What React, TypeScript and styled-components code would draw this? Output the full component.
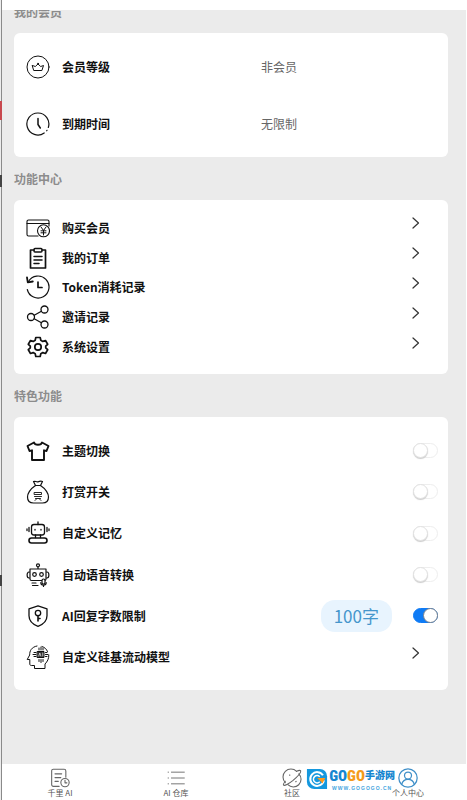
import React, { useState } from "react";
import styled, { createGlobalStyle } from "styled-components";

const GlobalStyle = createGlobalStyle`
  *, *::before, *::after { box-sizing: border-box; }
  body { margin: 0; background: #fff; font-family: "Noto Sans CJK SC", "Noto Sans", sans-serif; }
`;

const Frame = styled.div`
  display: flex;
  min-height: 100vh;
  padding-right: 1px;
`;

const Edge = styled.div`
  flex: none;
  width: 2px;
  background:
    linear-gradient(
      transparent 101px, #c8484e 101px 120px, transparent 120px 175px, #444 175px 187px,
      transparent 187px 575px, #444 575px 586px, transparent 586px
    ),
    linear-gradient(to right, #ececec 1px, #8a8a8a 1px);
`;

const Screen = styled.div`
  position: relative;
  flex: 1;
  min-width: 0;
  display: flex;
  flex-direction: column;
`;

const StatusBar = styled.div`
  height: 10px;
  background: #fff;
`;

const Scroller = styled.main`
  flex: 1;
  overflow: hidden;
  background: #ebebeb;
`;

const Sections = styled.div`
  margin-top: -20px;
  padding: 0 18px 0 12px;
`;

const Heading = styled.h2`
  margin: 0;
  font-size: 12px;
  font-weight: 700;
  line-height: 43px;
  color: #8c8c8c;
`;

const Card = styled.div<{ $pad: string }>`
  padding: ${(p) => p.$pad};
  border-radius: 6px;
  background: #fff;
`;

const InfoRow = styled.div`
  display: grid;
  grid-template-columns: 24px 1fr 1fr;
  gap: 12px;
  align-items: center;
  min-height: 57px;
  padding-left: 12px;
`;

const Label = styled.span`
  font-size: 12px;
  line-height: 18px;
  font-weight: 700;
  color: #111;
`;

const Value = styled.span`
  font-size: 12px;
  line-height: 18px;
  color: #666;
`;

const Rows = styled.div<{ $min: number }>`
  display: grid;
  grid-auto-rows: 1fr;
  min-height: ${(p) => p.$min}px;
`;

const rowLayout = `
  display: flex;
  align-items: center;
  gap: 12px;
  width: 100%;
`;

const LinkRow = styled.button`
  ${rowLayout}
  padding: 0 28px 0 12px;
  border: 0;
  background: none;
  font: inherit;
  text-align: left;
  cursor: pointer;
`;

const SwitchRow = styled.div`
  ${rowLayout}
  padding: 0 10px 0 12px;
`;

const Spacer = styled.span`
  flex: 1;
`;

const ChevronBox = styled.span`
  display: flex;
  padding-bottom: 9px;
`;

const Pill = styled.button`
  margin-right: 9px;
  padding: 0 13px;
  border: 0;
  border-radius: 14px;
  background: #e8f4fe;
  color: #4596cc;
  font: inherit;
  font-size: 17px;
  line-height: 32px;
`;

const Switch = styled.input`
  appearance: none;
  flex: none;
  display: flex;
  width: 25px;
  height: 15px;
  margin: 0;
  border: 1px solid #eee;
  border-radius: 8px;
  background: #fff;
  cursor: pointer;

  &::before {
    content: "";
    width: 15px;
    height: 15px;
    margin: -1px;
    border: 1px solid #e2e2e2;
    border-radius: 50%;
    background: #fff;
    box-shadow: 0 1px 1px #ccc;
  }
  &:checked {
    justify-content: flex-end;
    border-color: #0f7bf5;
    background: #0f7bf5;
  }
  &:checked::before {
    border-color: #77808c;
    box-shadow: none;
  }
`;

const TabBar = styled.nav`
  display: grid;
  grid-template-columns: repeat(4, 1fr);
  height: 36px;
  background: #fff;
`;

const Tab = styled.a`
  display: flex;
  flex-direction: column;
  align-items: center;
  padding-top: 4px;
  color: #555;
  font-size: 8px;
  line-height: 10px;
  text-decoration: none;
`;

const Watermark = styled.div`
  position: absolute;
  right: 71px;
  bottom: 9px;
  display: flex;
  gap: 1px;
  align-items: center;
`;

const Brand = styled.div`
  display: flex;
  flex-direction: column;
  align-items: center;
`;

const BrandName = styled.div`
  display: flex;
  align-items: center;
  font-family: "Liberation Sans Narrow", "Roboto Condensed", "Noto Sans CJK SC", sans-serif;
  font-weight: 900;
  line-height: 18px;
`;

const BrandPart = styled.span<{ $color: string; $size: number }>`
  color: ${(p) => p.$color};
  font-size: ${(p) => p.$size}px;
`;

const BrandUrl = styled.div`
  color: #45a5e0;
  font-family: "Liberation Sans", sans-serif;
  font-size: 5px;
  font-weight: 700;
  line-height: 6px;
  letter-spacing: 1px;
`;

const IconSvg = styled.svg`
  flex: none;
  display: block;
  fill: none;
  stroke: currentColor;
  stroke-linecap: round;
  stroke-linejoin: round;
`;

type IconProps = { children: React.ReactNode; size?: number; weight?: number; color?: string };

function Icon({ children, size = 24, weight = 1.3, color = "#111" }: IconProps) {
  return (
    <IconSvg width={size} height={size} viewBox="0 0 24 24" strokeWidth={weight} color={color} aria-hidden="true">
      {children}
    </IconSvg>
  );
}

const CrownIcon = () => (
  <Icon weight={1}>
    <circle cx="12" cy="12" r="11" />
    <path d="M6.500 10.500l2.800 1L12 9l2.700 2.500 2.800-1-1.600 5H8.100z" />
    <circle cx="12" cy="8.600" r=".5" />
  </Icon>
);

const ClockIcon = () => (
  <Icon weight={1.2}>
    <path d="M18.200 21A11 11 0 1 1 22.300 15.500M20.700 18.800l.3-.5" />
    <path d="M12 6.500v6l2.300 3.500" strokeWidth="1.5" />
  </Icon>
);

const BuyIcon = () => (
  <Icon weight={1.1}>
    <path d="M12 20H2.500A1.500 1.500 0 0 1 1 18.500v-13A1.500 1.500 0 0 1 2.500 4h19A1.500 1.500 0 0 1 23 5.500V10" />
    <path d="M1 7.500h22" />
    <circle cx="17.500" cy="14.800" r="6" />
    <path d="M15 11l2.500 3.500L20 11M17.500 14.500V19M15 14.800h5M15 16.800h5" strokeWidth="1" />
  </Icon>
);

const OrderIcon = () => (
  <Icon weight={1.5}>
    <path d="M8 4H4.500v18h15V4H16" strokeWidth="1.700" />
    <rect x="8" y="2.500" width="8" height="3.500" rx="1" />
    <path d="M8 10.500h8M8 14h8M8 17.500h5" />
  </Icon>
);

const HistoryIcon = () => (
  <Icon weight={1.2}>
    <path d="M2.500 6.500A11 11 0 1 1 1.300 14.500" />
    <path d="M1 2.500l.8 4.800 5-.8" strokeWidth="1.800" />
    <path d="M12 7v5.500h4" strokeWidth="1.700" />
  </Icon>
);

const ShareIcon = () => (
  <Icon weight={1.3}>
    <circle cx="5" cy="12" r="3.500" />
    <circle cx="18.500" cy="4.500" r="3.500" />
    <circle cx="18.500" cy="19.500" r="3.500" />
    <path d="M8.200 10.300l7.200-4M8.200 13.700l7.200 4" />
  </Icon>
);

const GearIcon = () => (
  <Icon weight={1.7}>
    <circle cx="12" cy="12" r="3.200" />
    <path d="M9.800 2.500h4.400l.6 2.800 2 1.100 2.700-.9 2.200 3.800-2 1.900v1.600l2 1.900-2.200 3.800-2.700-.9-2 1.100-.6 2.800H9.800l-.6-2.800-2-1.100-2.700.9-2.200-3.800 2-1.900v-1.600l-2-1.900 2.200-3.800 2.700.9 2-1.100z" />
  </Icon>
);

const ShirtIcon = () => (
  <Icon weight={1.9}>
    <path d="M8 3.500L1.500 7l2 5L6 11.300V21h12v-9.700l2.500.7 2-5L16 3.500c-.8 3-7.200 3-8 0z" />
  </Icon>
);

const BagIcon = () => (
  <Icon weight={1.2}>
    <path d="M9.500 5.500C4 9 1.500 14 1.500 17c0 4 2 6 6 6h9c4 0 6-2 6-6 0-3-2.500-8-8-11.500z" />
    <path d="M9.500 5.500L7.500 1.500c2-.8 2.500.7 4.500.3s2.500-1.100 4.500-.3l-2 4" />
    <path d="M8.500 12.500h7v2h-7zM8.500 16.500h7M9.500 18.500h5M9 20.500l1.500-1.500M15 20.500L13.500 19" strokeWidth=".9" />
  </Icon>
);

const MemoryRobotIcon = () => (
  <Icon weight={1.3}>
    <rect x="5.500" y="3.500" width="13" height="10.500" rx="2.500" />
    <path d="M12 1v2.500M9.500 14v2.500M14.500 14v2.500M3 6.500v4M21 6.500v4M1 8v1.500M23 8v1.500M9 8.300v.8M15 8.300v.8" />
    <rect x="3" y="17" width="18" height="5" rx="2.500" strokeWidth="1.600" />
  </Icon>
);

const VoiceRobotIcon = () => (
  <Icon weight={1.2}>
    <circle cx="12" cy="2.300" r="1.500" />
    <path d="M12 4v2M4 6h16v10a1.500 1.500 0 0 1-1.500 1.500h-13A1.500 1.500 0 0 1 4 16zM3 9c-2.500 0-2.500 6 0 6M21 9c2.500 0 2.500 6 0 6" />
    <circle cx="8.500" cy="11.500" r="1.800" />
    <circle cx="15.500" cy="11.500" r="1.800" />
    <path d="M6 20h4M6.500 22.500H12" />
    <rect x="16" y="16" width="3" height="5" rx="1.500" fill="#fff" />
    <path d="M14.800 19.500c0 3.500 5.400 3.500 5.400 0M17.500 22.200v1.300" />
  </Icon>
);

const ShieldIcon = () => (
  <Icon weight={1.3}>
    <path d="M12 1.800l9 3v7c0 5-4 8.700-9 10.500-5-1.800-9-5.500-9-10.500v-7z" />
    <circle cx="12" cy="9" r="2.700" />
    <path d="M12 11.700V17M12 14.500h2" strokeWidth="1.600" />
  </Icon>
);

const BrainIcon = () => (
  <Icon weight={1}>
    <path d="M11 1C5.500 2 3.500 6 3.700 10L1.200 14.500h2.600V19c0 1 .6 1.500 1.500 1.500H8.500V23.500H19V19c2.500-2.500 4-5.500 3.800-9" />
    <path d="M21.500 6.500C20.500 4 18.500 2.200 16 1.500" />
    <rect x="11.500" y="6.500" width="6.500" height="6" fill="#333" />
    <path d="M13 3v2M15 2v3M17 3v2M13 14.500v2M15 14.500v3M17 14.500v2M8 7.500h2M7 9.500h3M8 11.500h2M19.500 7.500H21M19.500 9.500H22M19.500 11.500H21" />
    <path d="M12.800 11l1-3 1 3M16.800 8v3" stroke="#fff" strokeWidth=".7" />
  </Icon>
);

const Chevron = () => (
  <IconSvg width="8" height="12" viewBox="0 0 8 12" strokeWidth="1.200" color="#333" aria-hidden="true">
    <path d="M1 1l5.500 5L1 11" />
  </IconSvg>
);

const NotesIcon = () => (
  <Icon size={20} color="#666">
    <path d="M11 22H4a2 2 0 0 1-2-2V3.500a2 2 0 0 1 2-2h13a2 2 0 0 1 2 2V11M6 7h8M6 11.500h7M6 16h4" />
    <circle cx="18" cy="17.500" r="5" />
    <path d="M18 14.800v3h2.300" />
  </Icon>
);

const ListIcon = () => (
  <Icon size={20} color="#777" weight={1.2}>
    <path d="M6.500 5H22M6.500 12H22M6.500 19H22M2.500 5h.5M2.500 12h.5M2.500 19h.5" />
  </Icon>
);

const PlanetIcon = () => (
  <Icon size={20} color="#666">
    <path d="M4 17.500A9.200 9.200 0 0 1 17.500 4M20.200 7A9.200 9.200 0 0 1 7 20" />
    <path d="M17.500 4c2.500-1.200 4.300-1.500 4.800-.6 1 2-3.800 7-9 11.500-5.300 4.300-10.500 7-11.500 5.500-.5-.8.500-2.500 2.200-4.500" />
    <path d="M9 8.500h.5M16.500 16.500l.5-.5" />
  </Icon>
);

const UserIcon = () => (
  <Icon size={20} color="#3f8fc8" weight={1.5}>
    <circle cx="12" cy="12" r="11" />
    <circle cx="12" cy="9" r="4.200" />
    <path d="M4.500 19.500c1-4 4-6 7.500-6s6.500 2 7.500 6" />
  </Icon>
);

const BrandMark = () => (
  <svg width="22" height="22" viewBox="0 0 24 24" aria-hidden="true">
    <path d="M1 1h14a8 8 0 0 1 8 8v14H9a8 8 0 0 1-8-8z" fill="#1598de" />
    <path d="M18.500 8A7.500 7.500 0 1 0 19.500 13.500" fill="none" stroke="#fff" strokeWidth="2.200" />
    <path d="M15 9.500a4 4 0 1 0 0 5.500" fill="none" stroke="#fff" strokeWidth="1.600" />
    <path d="M12 11h9l-3 6-2-2.500z" fill="#ff9a1c" />
  </svg>
);

const info = [
  { label: "会员等级", value: "非会员", icon: <CrownIcon /> },
  { label: "到期时间", value: "无限制", icon: <ClockIcon /> },
];

const links = [
  { label: "购买会员", icon: <BuyIcon /> },
  { label: "我的订单", icon: <OrderIcon /> },
  { label: "Token消耗记录", icon: <HistoryIcon /> },
  { label: "邀请记录", icon: <ShareIcon /> },
  { label: "系统设置", icon: <GearIcon /> },
];

const features = [
  { id: "theme", label: "主题切换", icon: <ShirtIcon /> },
  { id: "reward", label: "打赏开关", icon: <BagIcon /> },
  { id: "memory", label: "自定义记忆", icon: <MemoryRobotIcon /> },
  { id: "voice", label: "自动语音转换", icon: <VoiceRobotIcon /> },
  { id: "limit", label: "AI回复字数限制", icon: <ShieldIcon />, amount: "100字" },
];

const tabs = [
  { label: "千里 AI", icon: <NotesIcon /> },
  { label: "AI 仓库", icon: <ListIcon /> },
  { label: "社区", icon: <PlanetIcon /> },
  { label: "个人中心", icon: <UserIcon /> },
];

function NavRow({ label, icon }: { label: string; icon: React.ReactNode }) {
  return (
    <LinkRow type="button">
      {icon}
      <Label>{label}</Label>
      <Spacer />
      <ChevronBox>
        <Chevron />
      </ChevronBox>
    </LinkRow>
  );
}

export default function App() {
  const [on, setOn] = useState<Record<string, boolean>>({ limit: true });

  return (
    <>
      <GlobalStyle />
      <Frame>
        <Edge />
        <Screen>
          <StatusBar />
          <Scroller>
            <Sections>
              <Heading>我的会员</Heading>
              <Card $pad="5px 0">
                {info.map((item) => (
                  <InfoRow key={item.label}>
                    {item.icon}
                    <Label>{item.label}</Label>
                    <Value>{item.value}</Value>
                  </InfoRow>
                ))}
              </Card>
              <Heading>功能中心</Heading>
              <Card $pad="13px 0 12px">
                <Rows $min={149}>
                  {links.map((item) => (
                    <NavRow key={item.label} {...item} />
                  ))}
                </Rows>
              </Card>
              <Heading>特色功能</Heading>
              <Card $pad="13px 0 12px">
                <Rows $min={248}>
                  {features.map((item) => (
                    <SwitchRow key={item.id}>
                      {item.icon}
                      <Label as="label" htmlFor={item.id}>
                        {item.label}
                      </Label>
                      <Spacer />
                      {item.amount && <Pill type="button">{item.amount}</Pill>}
                      <Switch
                        id={item.id}
                        type="checkbox"
                        role="switch"
                        checked={!!on[item.id]}
                        onChange={(e) => setOn({ ...on, [item.id]: e.target.checked })}
                      />
                    </SwitchRow>
                  ))}
                  <NavRow label="自定义硅基流动模型" icon={<BrainIcon />} />
                </Rows>
              </Card>
            </Sections>
          </Scroller>
          <TabBar>
            {tabs.map((tab) => (
              <Tab key={tab.label} href="#">
                {tab.icon}
                {tab.label}
              </Tab>
            ))}
          </TabBar>
          <Watermark>
            <BrandMark />
            <Brand>
              <BrandName>
                <BrandPart $color="#1686d0" $size={15}>GO</BrandPart>
                <BrandPart $color="#f59a1b" $size={15}>GO</BrandPart>
                <BrandPart $color="#1686d0" $size={10}>手游网</BrandPart>
              </BrandName>
              <BrandUrl>WWW.GOGOGO.CN</BrandUrl>
            </Brand>
          </Watermark>
        </Screen>
      </Frame>
    </>
  );
}
